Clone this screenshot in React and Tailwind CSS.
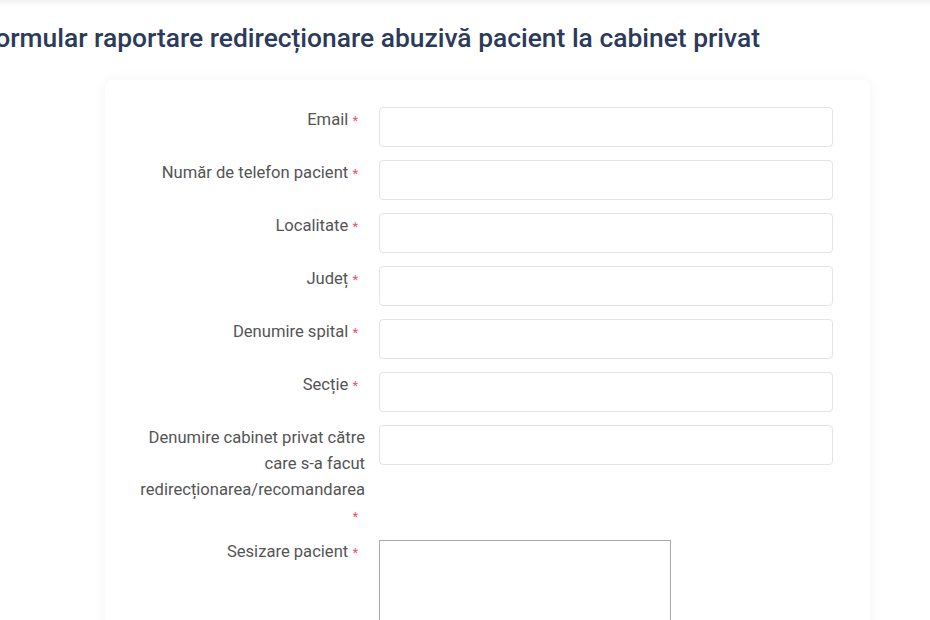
const fields = [
  { label: 'Email' },
  { label: 'Număr de telefon pacient' },
  { label: 'Localitate' },
  { label: 'Județ' },
  { label: 'Denumire spital' },
  { label: 'Secție' },
  { label: 'Denumire cabinet privat către care s-a facut redirecționarea/recomandarea' },
];

function Label({ text }) {
  return (
    <label className="w-[260px] shrink-0 text-right text-[16.6px] leading-[26px] text-[#555] pl-[30px]">
      {text} <span className="text-[#f0506e] text-[13px] mr-[7px]">*</span>
    </label>
  );
}

export default function App() {
  return (
    <div className="min-h-[620px] bg-white overflow-hidden" style={{ fontFamily: 'Roboto, "Liberation Sans", sans-serif' }}>
      <div className="h-[6px] bg-gradient-to-b from-[#f1f1f1] to-white" />
      <div className="-ml-[12px]">
        <h1 className="-ml-[7px] mt-[17px] text-[26.4px] leading-[30px] font-medium text-[#2c3a5b] whitespace-nowrap">
          Formular raportare redirecționare abuzivă pacient la cabinet privat
        </h1>
        <div className="ml-[117px] mt-[27px] w-[765px] bg-white rounded-md shadow-[0_0_14px_rgba(0,0,0,0.05)] pt-[27px] pb-[40px]">
          <form className="flex flex-col gap-[13px]">
            {fields.map((f) => (
              <div key={f.label} className="flex items-start">
                <Label text={f.label} />
                <input
                  type="text"
                  className="ml-[14px] w-[454px] h-[40px] rounded-[4px] border border-[#e3e3ea] bg-white outline-none"
                />
              </div>
            ))}
            <div className="flex items-start -mt-[4px]">
              <Label text="Sesizare pacient" />
              <textarea className="ml-[14px] mt-[1px] w-[292px] h-[150px] border border-[#a9a9a9] bg-white outline-none resize-none" />
            </div>
          </form>
        </div>
      </div>
    </div>
  );
}
